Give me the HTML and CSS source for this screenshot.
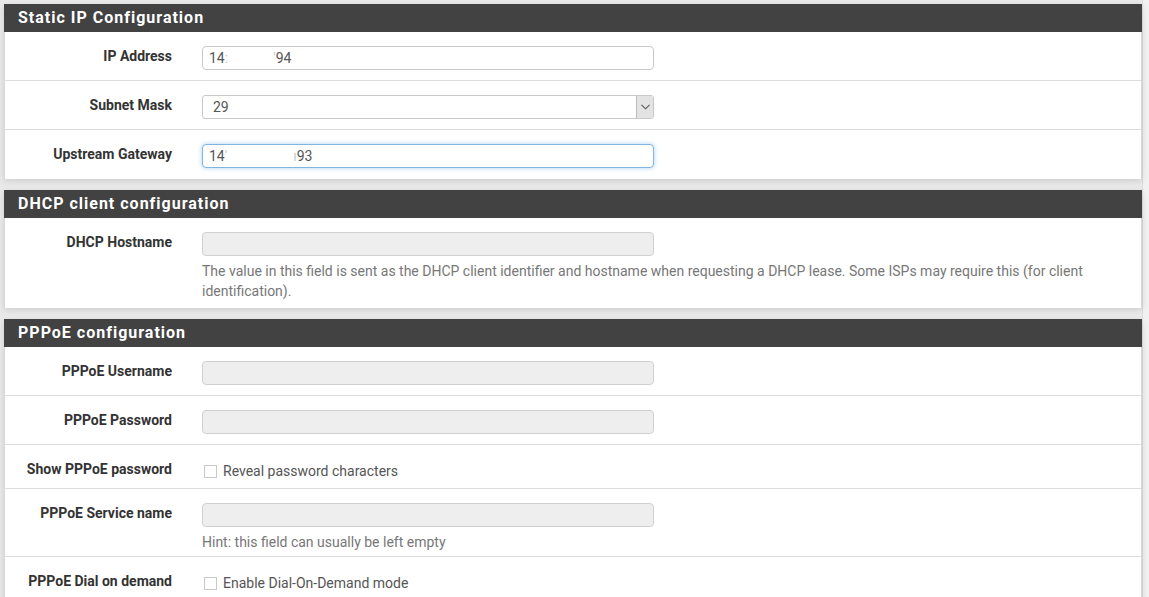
FILE: index.html
```html
<!DOCTYPE html>
<html>
<head>
<meta charset="utf-8">
<link rel="stylesheet" href="styles.css">
</head>
<body>
<div class="page">
  <section class="panel">
    <h2 class="panel-title">Static IP Configuration</h2>
    <div class="panel-body">
      <div class="row">
        <label class="lbl">IP Address</label>
        <div class="field"><div class="input">14<span class="blur">:</span>&nbsp;&nbsp;&nbsp;&nbsp;&nbsp;&nbsp;&nbsp;&nbsp;&nbsp;&nbsp;&nbsp;&nbsp;&nbsp;<span class="blur">'</span>94</div></div>
      </div>
      <div class="row">
        <label class="lbl">Subnet Mask</label>
        <div class="field">
          <div class="select"><span class="sel-val">29</span><span class="sel-btn"><svg width="9" height="6" viewBox="0 0 9 6"><path d="M0.5 0.8 L4.5 4.8 L8.5 0.8" fill="none" stroke="#555" stroke-width="1.1"/></svg></span></div>
        </div>
      </div>
      <div class="row last">
        <label class="lbl">Upstream Gateway</label>
        <div class="field"><div class="input focus">14<span class="blur">'</span>&nbsp;&nbsp;&nbsp;&nbsp;&nbsp;&nbsp;&nbsp;&nbsp;&nbsp;&nbsp;&nbsp;&nbsp;&nbsp;&nbsp;&nbsp;&nbsp;&nbsp;&nbsp;&nbsp;<span class="blur">ı</span>93</div></div>
      </div>
    </div>
  </section>

  <section class="panel">
    <h2 class="panel-title">DHCP client configuration</h2>
    <div class="panel-body">
      <div class="row help-row last">
        <label class="lbl">DHCP Hostname</label>
        <div class="field">
          <div class="input disabled"></div>
          <p class="help">The value in this field is sent as the DHCP client identifier and hostname when requesting a DHCP lease. Some ISPs may require this (for client identification).</p>
        </div>
      </div>
    </div>
  </section>

  <section class="panel">
    <h2 class="panel-title">PPPoE configuration</h2>
    <div class="panel-body">
      <div class="row">
        <label class="lbl">PPPoE Username</label>
        <div class="field"><div class="input disabled"></div></div>
      </div>
      <div class="row">
        <label class="lbl">PPPoE Password</label>
        <div class="field"><div class="input disabled"></div></div>
      </div>
      <div class="row check-row">
        <label class="lbl">Show PPPoE password</label>
        <div class="field check"><span class="box"></span><span class="check-text">Reveal password characters</span></div>
      </div>
      <div class="row help-row">
        <label class="lbl">PPPoE Service name</label>
        <div class="field">
          <div class="input disabled"></div>
          <p class="help">Hint: this field can usually be left empty</p>
        </div>
      </div>
      <div class="row check-row">
        <label class="lbl">PPPoE Dial on demand</label>
        <div class="field check"><span class="box"></span><span class="check-text">Enable Dial-On-Demand mode</span></div>
      </div>
    </div>
  </section>
</div>
</body>
</html>
```
FILE: styles.css
```css
* { box-sizing: border-box; }
html, body { margin: 0; padding: 0; }
body {
  background: #f1f1f1;
  font-family: Roboto, "Liberation Sans", sans-serif;
  font-size: 14px;
  color: #333;
  overflow: hidden;
}
.page {
  padding: 4px 0 0 4px;
  width: 1143px;
  border-right: 1px solid #dcdcdc;
  background: #e9e9e9;
  min-height: 597px;
}
.panel {
  width: 1138px;
  margin-bottom: 11px;
  background: #fff;
  box-shadow: 0 2px 6px rgba(0,0,0,0.12);
}
.panel-title {
  margin: 0;
  height: 28px;
  line-height: 27px;
  padding-left: 14px;
  background: #424242;
  color: #fff;
  font-size: 16px;
  font-weight: 700;
  letter-spacing: 1px;
}
.panel-body {
  border-left: 1px solid #d8d8d8;
  border-right: 1px solid #d8d8d8;
}
.row {
  display: flex;
  align-items: flex-start;
  padding: 14px 0 10px;
  border-bottom: 1px solid #ddd;
}
.row.last { border-bottom: none; padding-bottom: 11px; }
.help-row { padding-bottom: 4px; }
.help-row.last { padding-bottom: 7px; }
.check-row { padding-bottom: 5px; }
.lbl {
  width: 167px;
  flex: none;
  text-align: right;
  font-weight: 700;
  line-height: 20px;
  color: #333;
}
.field {
  margin-left: 30px;
  width: 452px;
  flex: none;
}
.input {
  height: 24px;
  border: 1px solid #c8c8c8;
  border-radius: 4px;
  background: #fff;
  padding: 0 6px;
  line-height: 23px;
  color: #555;
  font-size: 14px;
  white-space: nowrap;
}
.input .blur { color: #c8c8c8; }
.input.focus {
  border-color: #7fb5e0;
  box-shadow: 0 0 5px rgba(102,175,233,0.55);
}
.input.disabled { background: #eee; border-color: #d0d0d0; }
.select {
  height: 24px;
  border: 1px solid #c8c8c8;
  border-radius: 3px;
  display: flex;
  align-items: stretch;
  background: #fff;
}
.sel-val { flex: 1; padding-left: 10px; line-height: 23px; color: #555; }
.sel-btn {
  width: 17px;
  background: #e3e3e3;
  border-left: 1px solid #bbb;
  display: flex;
  align-items: center;
  justify-content: center;
}
.help {
  margin: 5px 0 0;
  width: 900px;
  line-height: 20px;
  color: #777;
  font-size: 14px;
}
.check {
  display: flex;
  align-items: center;
  height: 24px;
  padding-left: 2px;
}
.box {
  width: 13px;
  height: 13px;
  border: 1px solid #c8c8c8;
  background: #fff;
  margin-right: 6px;
}
.check-text { color: #555; font-size: 14px; }
```
